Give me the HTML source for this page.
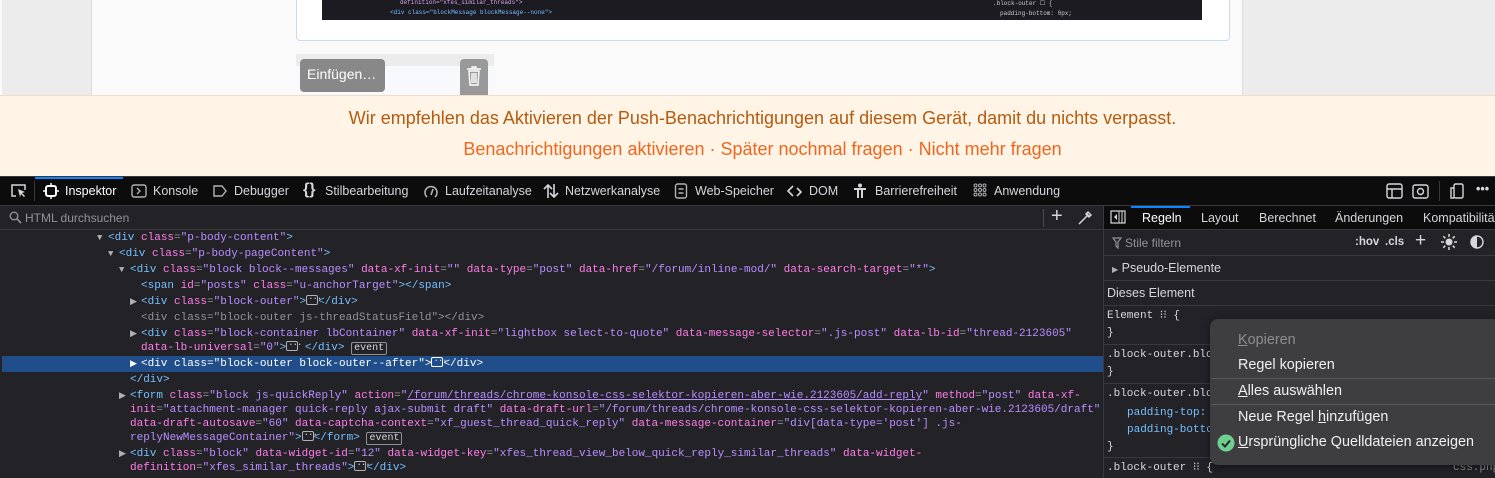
<!DOCTYPE html>
<html><head><meta charset="utf-8"><style>
*{margin:0;padding:0;box-sizing:border-box}
body{width:1495px;height:478px;overflow:hidden;position:relative;background:#232327;font-family:"Liberation Sans","DejaVu Sans",sans-serif}
.a{position:absolute}
.ui{color:#d7d7db;font-size:12.5px;white-space:nowrap}
.code{font-family:"Liberation Mono",monospace;font-size:11px;white-space:pre;color:#939395;line-height:16px;height:16px}
.t{color:#75bfff}.n{color:#ff7de9}.v{color:#b98eff}.g{color:#939395}
.b{display:inline-block;width:12px;height:10px;border:1px solid #b1b1b3;border-radius:2px;vertical-align:-1px;position:relative}
.b:after{content:"···";position:absolute;left:1px;top:-5px;font-size:9px;color:#d7d7db;letter-spacing:-1px}
.ev{display:inline-block;border:1px solid #8f8f9d;border-radius:2px;padding:0 2px;line-height:11px;color:#d7d7db;font-size:10px}
.ar{color:#b1b1b3;font-size:9px;display:inline-block;width:11px;margin-left:-11px;text-align:left}
.mi{position:absolute;left:1238px;color:#f0f0f0;font-size:14.4px}
</style></head><body>
<!-- page -->
<div class="a" style="left:0;top:0;width:1495px;height:95px;background:#fafafa"></div>
<div class="a" style="left:2px;top:0;width:90px;height:95px;background:#ececec;border-right:1px solid #dcdcdc"></div>
<div class="a" style="left:1242px;top:0;width:253px;height:95px;background:#ececec;border-left:1px solid #dcdcdc"></div>
<div class="a" style="left:296px;top:-5px;width:934px;height:46px;background:#fff;border:1px solid #c6dcee;border-radius:4px"></div>
<div class="a" style="left:322px;top:0;width:880px;height:20px;background:#1c1b22"></div>
<div class="a code" style="left:400px;top:-1px;font-size:6px;line-height:8px;color:#d7a3e6">definition="xfes_similar_threads"&gt;</div>
<div class="a code" style="left:390px;top:9px;font-size:6px;line-height:8px;color:#75bfff">&lt;div class="blockMessage blockMessage--none"&gt;</div>
<div class="a code" style="left:993px;top:0px;font-size:6px;line-height:8px;color:#ccc">.block-outer ☐ {</div>
<div class="a code" style="left:1000px;top:10px;font-size:6px;line-height:8px;color:#ccc">padding-bottom: 0px;</div>
<div class="a" style="left:296px;top:54px;width:198px;height:41px;background:#ececec"></div>
<div class="a" style="left:296px;top:66px;width:198px;height:29px;background:#f7f9fc"></div>
<div class="a" style="left:300px;top:59px;width:85px;height:33px;background:#888;border-radius:4px;color:#fff;font-size:14px;line-height:31px;padding-left:7px">Einfügen…</div>
<div class="a" style="left:460px;top:59px;width:28px;height:36px;background:#999;border-radius:4px 4px 0 0"></div>
<svg class="a" style="left:464px;top:64px" width="20" height="24" viewBox="0 0 20 24"><path d="M3 5h14M8 5V3h4v2M5 7h10l-1 14H6z M8 9v10M10 9v10M12 9v10" fill="none" stroke="#fff" stroke-width="1.4"/></svg>
<!-- banner -->
<div class="a" style="left:0;top:95px;width:1495px;height:81px;background:#fff4e6;border-top:1px solid #f0dccb"></div>
<div class="a" style="left:0;top:108px;width:1525px;text-align:center;color:#b55b10;font-size:18px">Wir empfehlen das Aktivieren der Push-Benachrichtigungen auf diesem Gerät, damit du nichts verpasst.</div>
<div class="a" style="left:0;top:139px;width:1525px;text-align:center;color:#f0661f;font-size:18px">Benachrichtigungen aktivieren · Später nochmal fragen · Nicht mehr fragen</div>
<!-- toolbar -->
<div class="a" style="left:0;top:176px;width:1495px;height:30px;background:#0c0c0d;border-top:1px solid #38383d;border-bottom:1px solid #38383d"></div>
<div class="a" style="left:35px;top:177px;width:88px;height:2px;background:#0a84ff"></div>
<div class="a" style="left:34px;top:181px;width:1px;height:20px;background:#38383d"></div>
<svg class="a" style="left:10px;top:183px" width="18" height="16"><path d="M6 13H2V2h13v5" fill="none" stroke="#d7d7db" stroke-width="1.5"/><path d="M8 6l7 3-3 1 3 3-1 1-3-3-1 3z" fill="#d7d7db"/></svg>
<svg class="a" style="left:43px;top:183px" width="16" height="16"><rect x="3" y="3" width="10" height="10" rx="2" fill="none" stroke="#fff" stroke-width="2"/><path d="M8 0v3M8 13v3M0 8h3M13 8h3" stroke="#fff" stroke-width="1.5"/></svg>
<div class="a ui" style="left:65px;top:184px;color:#fff">Inspektor</div>
<svg class="a" style="left:131px;top:183px" width="16" height="16"><rect x="1" y="2" width="14" height="12" rx="2" fill="none" stroke="#b1b1b3" stroke-width="1.4"/><path d="M6 5l3 3-3 3" fill="none" stroke="#b1b1b3" stroke-width="1.4"/></svg>
<div class="a ui" style="left:153px;top:184px">Konsole</div>
<svg class="a" style="left:212px;top:183px" width="16" height="16"><path d="M2 3h8l4 5-4 5H2z" fill="none" stroke="#b1b1b3" stroke-width="1.4"/></svg>
<div class="a ui" style="left:234px;top:184px">Debugger</div>
<div class="a ui" style="left:303px;top:181px;font-size:16px;font-weight:bold">{}</div>
<div class="a ui" style="left:325px;top:184px">Stilbearbeitung</div>
<svg class="a" style="left:423px;top:183px" width="16" height="16"><path d="M4 14A6 6 0 1 1 12 14" fill="none" stroke="#b1b1b3" stroke-width="1.6"/><path d="M8 12l2-6" stroke="#b1b1b3" stroke-width="1.6"/></svg>
<div class="a ui" style="left:445px;top:184px">Laufzeitanalyse</div>
<svg class="a" style="left:543px;top:183px" width="16" height="16"><path d="M5 15V2M1 6l4-4 4 4M11 1v13M7 10l4 4 4-4" fill="none" stroke="#d7d7db" stroke-width="1.6"/></svg>
<div class="a ui" style="left:565px;top:184px">Netzwerkanalyse</div>
<svg class="a" style="left:674px;top:183px" width="14" height="16"><rect x="1.5" y="1" width="11" height="14" rx="2" fill="none" stroke="#b1b1b3" stroke-width="1.4"/><path d="M4.5 6h5M4.5 10h5" stroke="#b1b1b3" stroke-width="1.4"/></svg>
<div class="a ui" style="left:695px;top:184px">Web-Speicher</div>
<svg class="a" style="left:786px;top:183px" width="18" height="16"><path d="M7 3L2 8l5 5M11 5l4 4-4 4" fill="none" stroke="#d7d7db" stroke-width="1.6"/></svg>
<div class="a ui" style="left:809px;top:184px">DOM</div>
<svg class="a" style="left:853px;top:183px" width="14" height="16"><circle cx="7" cy="2.5" r="2" fill="#d7d7db"/><path d="M1 6h12M5 6v9M9 6v9" stroke="#d7d7db" stroke-width="2"/></svg>
<div class="a ui" style="left:875px;top:184px">Barrierefreiheit</div>
<svg class="a" style="left:973px;top:183px" width="14" height="14"><g fill="none" stroke="#b1b1b3" stroke-width="1"><circle cx="2.5" cy="2.5" r="1.5"/><circle cx="7" cy="2.5" r="1.5"/><circle cx="11.5" cy="2.5" r="1.5"/><circle cx="2.5" cy="7" r="1.5"/><circle cx="7" cy="7" r="1.5"/><circle cx="11.5" cy="7" r="1.5"/><circle cx="2.5" cy="11.5" r="1.5"/><circle cx="7" cy="11.5" r="1.5"/><circle cx="11.5" cy="11.5" r="1.5"/></g></svg>
<div class="a ui" style="left:994px;top:184px">Anwendung</div>
<svg class="a" style="left:1386px;top:183px" width="18" height="16"><rect x="1" y="1" width="15" height="14" rx="2" fill="none" stroke="#d7d7db" stroke-width="1.4"/><path d="M1 6h15M6 6v9" stroke="#d7d7db" stroke-width="1.4"/></svg>
<svg class="a" style="left:1412px;top:183px" width="18" height="16"><rect x="1" y="2" width="15" height="13" rx="2" fill="none" stroke="#d7d7db" stroke-width="1.4"/><circle cx="8.5" cy="8.5" r="3" fill="none" stroke="#d7d7db" stroke-width="1.4"/></svg>
<div class="a" style="left:1439px;top:181px;width:1px;height:20px;background:#38383d"></div>
<svg class="a" style="left:1449px;top:183px" width="16" height="16"><rect x="5" y="1" width="9" height="14" rx="1.5" fill="none" stroke="#d7d7db" stroke-width="1.4"/><path d="M5 5H2v10h3" fill="none" stroke="#d7d7db" stroke-width="1.4"/></svg>
<div class="a ui" style="left:1476px;top:182px;font-weight:bold">•••</div>
<!-- search row -->
<div class="a" style="left:0;top:206px;width:1103px;height:24px;background:#232327;border-bottom:1px solid #38383d"></div>
<svg class="a" style="left:9px;top:211px" width="13" height="13"><circle cx="5" cy="5" r="3.8" fill="none" stroke="#939395" stroke-width="1.4"/><path d="M8 8l4 4" stroke="#939395" stroke-width="1.6"/></svg>
<div class="a ui" style="left:25px;top:211px;color:#939395;font-size:12px">HTML durchsuchen</div>
<div class="a" style="left:1043px;top:209px;width:1px;height:18px;background:#4a4a4f"></div>
<div class="a ui" style="left:1051px;top:205px;font-size:20px">+</div>
<svg class="a" style="left:1077px;top:210px" width="16" height="16"><path d="M2 14l8-8M9 3l4 4M11 2l3 3-2 2-3-3z" stroke="#d7d7db" stroke-width="1.5" fill="none"/></svg>
<!-- tree -->
<div class="a" style="left:2px;top:356px;width:1101px;height:16px;background:#204e8a"></div>
<div class="a code" style="left:108px;top:230px"><span class="ar">▼</span><span class="t">&lt;div</span> <span class="n">class</span>=<span class="v">"p-body-content"</span><span class="t">&gt;</span></div>
<div class="a code" style="left:119px;top:246px"><span class="ar">▼</span><span class="t">&lt;div</span> <span class="n">class</span>=<span class="v">"p-body-pageContent"</span><span class="t">&gt;</span></div>
<div class="a code" style="left:130px;top:262px"><span class="ar">▼</span><span class="t">&lt;div</span> <span class="n">class</span>=<span class="v">"block block--messages"</span> <span class="n">data-xf-init</span>=<span class="v">""</span> <span class="n">data-type</span>=<span class="v">"post"</span> <span class="n">data-href</span>=<span class="v">"/forum/inline-mod/"</span> <span class="n">data-search-target</span>=<span class="v">"*"</span><span class="t">&gt;</span></div>
<div class="a code" style="left:141px;top:278px"><span class="t">&lt;span</span> <span class="n">id</span>=<span class="v">"posts"</span> <span class="n">class</span>=<span class="v">"u-anchorTarget"</span><span class="t">&gt;&lt;/span&gt;</span></div>
<div class="a code" style="left:141px;top:294px"><span class="ar">▶</span><span class="t">&lt;div</span> <span class="n">class</span>=<span class="v">"block-outer"</span><span class="t">&gt;</span><span class="b"></span><span class="t">&lt;/div&gt;</span></div>
<div class="a code" style="left:141px;top:310px;color:#939395">&lt;div class="block-outer js-threadStatusField"&gt;&lt;/div&gt;</div>
<div class="a code" style="left:141px;top:326px"><span class="ar">▶</span><span class="t">&lt;div</span> <span class="n">class</span>=<span class="v">"block-container lbContainer"</span> <span class="n">data-xf-init</span>=<span class="v">"lightbox select-to-quote"</span> <span class="n">data-message-selector</span>=<span class="v">".js-post"</span> <span class="n">data-lb-id</span>=<span class="v">"thread-2123605"</span></div>
<div class="a code" style="left:141px;top:340px"><span class="n">data-lb-universal</span>=<span class="v">"0"</span><span class="t">&gt;</span><span class="b"></span> <span class="t">&lt;/div&gt;</span> <span class="ev">event</span></div>
<div class="a code" style="left:141px;top:356px;color:#fff"><span class="ar" style="color:#fff">▶</span>&lt;div class="block-outer block-outer--after"&gt;<span class="b" style="border-color:#fff"></span>&lt;/div&gt;</div>
<div class="a code" style="left:130px;top:372px"><span class="t">&lt;/div&gt;</span></div>
<div class="a code" style="left:130px;top:388px"><span class="ar">▶</span><span class="t">&lt;form</span> <span class="n">class</span>=<span class="v">"block js-quickReply"</span> <span class="n">action</span>=<span class="v">"<u>/forum/threads/chrome-konsole-css-selektor-kopieren-aber-wie.2123605/add-reply</u>"</span> <span class="n">method</span>=<span class="v">"post"</span> <span class="n">data-xf-</span></div>
<div class="a code" style="left:130px;top:402px"><span class="n">init</span>=<span class="v">"attachment-manager quick-reply ajax-submit draft"</span> <span class="n">data-draft-url</span>=<span class="v">"/forum/threads/chrome-konsole-css-selektor-kopieren-aber-wie.2123605/draft"</span></div>
<div class="a code" style="left:130px;top:416px"><span class="n">data-draft-autosave</span>=<span class="v">"60"</span> <span class="n">data-captcha-context</span>=<span class="v">"xf_guest_thread_quick_reply"</span> <span class="n">data-message-container</span>=<span class="v">"div[data-type='post'] .js-</span></div>
<div class="a code" style="left:130px;top:430px"><span class="v">replyNewMessageContainer"</span><span class="t">&gt;</span><span class="b"></span><span class="t">&lt;/form&gt;</span> <span class="ev">event</span></div>
<div class="a code" style="left:130px;top:446px"><span class="ar">▶</span><span class="t">&lt;div</span> <span class="n">class</span>=<span class="v">"block"</span> <span class="n">data-widget-id</span>=<span class="v">"12"</span> <span class="n">data-widget-key</span>=<span class="v">"xfes_thread_view_below_quick_reply_similar_threads"</span> <span class="n">data-widget-</span></div>
<div class="a code" style="left:130px;top:460px"><span class="n">definition</span>=<span class="v">"xfes_similar_threads"</span><span class="t">&gt;</span><span class="b"></span><span class="t">&lt;/div&gt;</span></div>
<!-- right panel -->
<div class="a" style="left:1103px;top:206px;width:392px;height:272px;background:#232327;border-left:1px solid #38383d"></div>
<div class="a" style="left:1104px;top:206px;width:391px;height:24px;background:#0c0c0d;border-bottom:1px solid #38383d"></div>
<div class="a" style="left:1131px;top:206px;width:59px;height:2px;background:#0a84ff"></div>
<svg class="a" style="left:1110px;top:210px" width="16" height="14"><rect x="1" y="1" width="14" height="12" fill="none" stroke="#d7d7db" stroke-width="1.2"/><path d="M9 1v12M12 1v12" stroke="#d7d7db"/><path d="M7 4l-3 3 3 3z" fill="#d7d7db"/></svg>
<div class="a ui" style="left:1142px;top:211px;color:#fff">Regeln</div>
<div class="a ui" style="left:1201px;top:211px">Layout</div>
<div class="a ui" style="left:1259px;top:211px">Berechnet</div>
<div class="a ui" style="left:1335px;top:211px">Änderungen</div>
<div class="a ui" style="left:1423px;top:211px">Kompatibilität</div>
<div class="a" style="left:1104px;top:255px;width:391px;height:1px;background:#38383d"></div>
<div class="a" style="left:1104px;top:280px;width:391px;height:1px;background:#38383d"></div>
<div class="a" style="left:1104px;top:305px;width:391px;height:1px;background:#38383d"></div>
<svg class="a" style="left:1112px;top:237px" width="10" height="12"><path d="M1 1h8L6 5v6L4 9V5z" fill="none" stroke="#939395" stroke-width="1.2"/></svg>
<div class="a ui" style="left:1125px;top:236px;color:#939395;font-size:12px">Stile filtern</div>
<div class="a ui" style="left:1355px;top:236px;font-size:11.5px;font-weight:bold">:hov</div>
<div class="a ui" style="left:1385px;top:236px;font-size:11.5px;font-weight:bold">.cls</div>
<div class="a ui" style="left:1415px;top:230px;font-size:19px">+</div>
<svg class="a" style="left:1441px;top:234px" width="16" height="16"><circle cx="8" cy="8" r="3.5" fill="#d7d7db"/><path d="M8 0v3M8 13v3M0 8h3M13 8h3M2.3 2.3l2 2M11.7 11.7l2 2M2.3 13.7l2-2M11.7 4.3l2-2" stroke="#d7d7db" stroke-width="1.5"/></svg>
<svg class="a" style="left:1470px;top:235px" width="14" height="14"><circle cx="7" cy="7" r="6" fill="none" stroke="#d7d7db" stroke-width="1.4"/><path d="M7 1A6 6 0 0 0 7 13z" fill="#d7d7db"/></svg>
<div class="a ui" style="left:1112px;top:261px"><span style="font-size:8px;color:#b1b1b3">▶</span> Pseudo-Elemente</div>
<div class="a ui" style="left:1107px;top:286px">Dieses Element</div>
<div class="a code" style="left:1107px;top:308px;color:#d7d7db">Element ⁝⁝ {</div>
<div class="a code" style="left:1107px;top:325px;color:#d7d7db">}</div>
<div class="a" style="left:1104px;top:344px;width:391px;height:1px;background:#38383d"></div>
<div class="a code" style="left:1107px;top:347px;color:#d7d7db">.block-outer.blo</div>
<div class="a code" style="left:1107px;top:364px;color:#d7d7db">}</div>
<div class="a" style="left:1104px;top:383px;width:391px;height:1px;background:#38383d"></div>
<div class="a code" style="left:1107px;top:386px;color:#d7d7db">.block-outer.blo</div>
<div class="a code" style="left:1127px;top:405px;color:#75bfff">padding-top:</div>
<div class="a code" style="left:1127px;top:422px;color:#75bfff">padding-botto</div>
<div class="a code" style="left:1107px;top:439px;color:#d7d7db">}</div>
<div class="a" style="left:1104px;top:457px;width:391px;height:1px;background:#38383d"></div>
<div class="a code" style="left:1107px;top:460px;color:#d7d7db">.block-outer ⁝⁝ {</div>
<div class="a code" style="left:1453px;top:460px;color:#939395">css.php</div>
<!-- context menu -->
<div class="a" style="left:1210px;top:319px;width:300px;height:146px;background:#3e3e40;border-radius:8px;box-shadow:0 2px 8px rgba(0,0,0,.5)"></div>
<div class="mi" style="top:332px;color:#8e8e90"><u>K</u>opieren</div>
<div class="mi" style="top:357px">Regel kopieren</div>
<div class="a" style="left:1211px;top:378px;width:284px;height:1px;background:#59595c"></div>
<div class="mi" style="top:383px"><u>A</u>lles auswählen</div>
<div class="a" style="left:1211px;top:404px;width:284px;height:1px;background:#59595c"></div>
<div class="mi" style="top:409px">Neue Regel <u>h</u>inzufügen</div>
<svg class="a" style="left:1217px;top:434px" width="18" height="18"><circle cx="9" cy="9" r="8.5" fill="#6fcf8f"/><path d="M5 9.5l3 3 5-6" fill="none" stroke="#2a2a2e" stroke-width="2"/></svg>
<div class="mi" style="top:434px"><u>U</u>rsprüngliche Quelldateien anzeigen</div>
</body></html>
